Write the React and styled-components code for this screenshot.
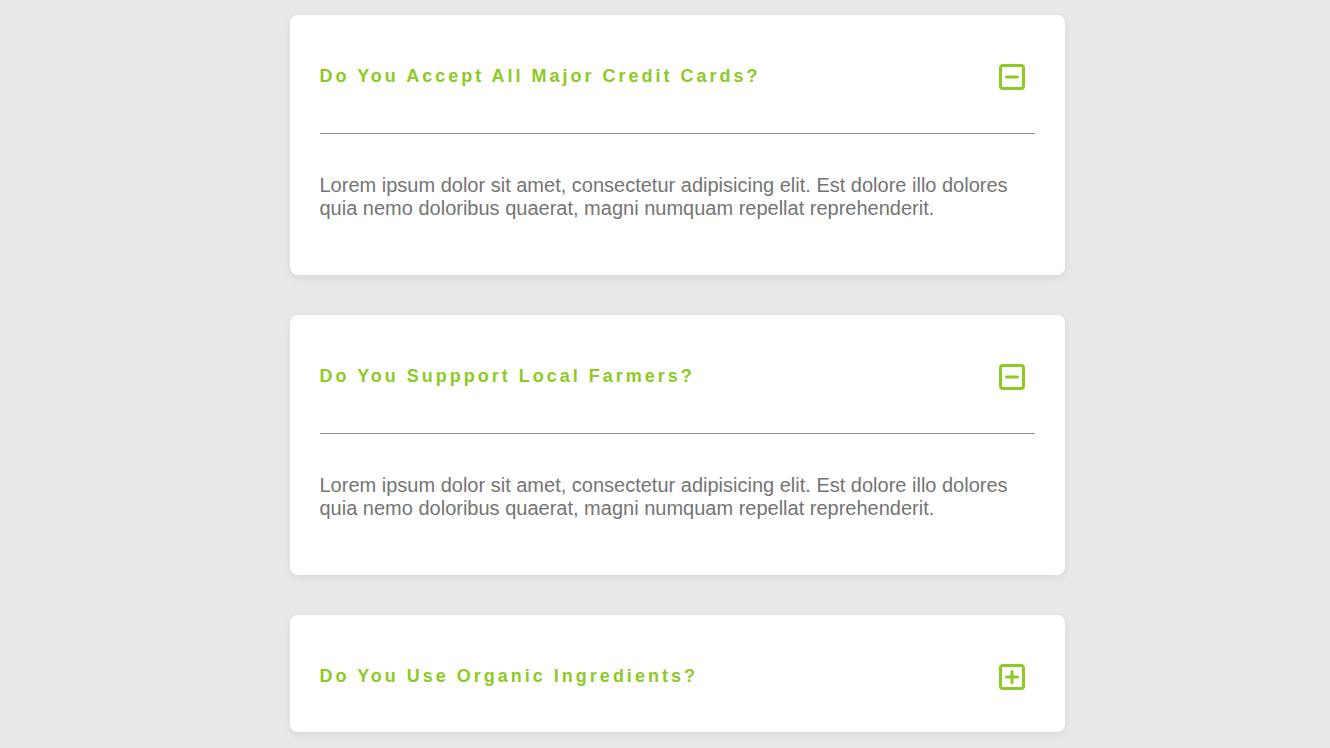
import { useState } from "react"
import styled, { createGlobalStyle } from "styled-components"

const GlobalStyle = createGlobalStyle`
  * { box-sizing: border-box; }
  body {
    margin: 0;
    background: #e9e9e9;
    font-family: "Liberation Sans", Arial, sans-serif;
  }
`

const Wrapper = styled.div`
  padding-left: 24px;
`

const Page = styled.div`
  width: 775px;
  margin: 0 auto;
  padding: 15px 0;
  display: flex;
  flex-direction: column;
  gap: 40px;
`

const Card = styled.div`
  background: #fff;
  border-radius: 8px;
  padding: 0 30px;
  box-shadow: 0 3px 10px rgba(0, 0, 0, 0.08);
`

const Header = styled.div`
  display: flex;
  align-items: center;
  justify-content: space-between;
  padding: 43px 0 ${(props) => (props.open ? "38px" : "37px")};
  border-bottom: ${(props) => (props.open ? "1px solid #8f8f8f" : "none")};
  cursor: pointer;
`

const Title = styled.h3`
  margin: 0;
  font-size: 18px;
  line-height: 37px;
  font-weight: 700;
  letter-spacing: 3px;
  color: #8dca24;
`

const Toggle = styled.span`
  width: 26px;
  height: 26px;
  margin-right: 10px;
  display: flex;
  align-items: center;
  justify-content: center;
`

const Body = styled.p`
  margin: 0;
  padding: 40px 20px 55px 0;
  font-size: 20px;
  line-height: 23px;
  color: #747474;
`

const Icon = ({ open }) => (
  <svg width="26" height="26" viewBox="0 0 26 26" fill="none" stroke="#8dca24" strokeWidth="3" strokeLinecap="round">
    <rect x="1.5" y="1.5" width="23" height="23" rx="2.5" />
    <line x1="7.5" y1="13" x2="18.5" y2="13" />
    {!open && <line x1="13" y1="7.5" x2="13" y2="18.5" />}
  </svg>
)

const faqs = [
  { q: "Do You Accept All Major Credit Cards?", open: true },
  { q: "Do You Suppport Local Farmers?", open: true },
  { q: "Do You Use Organic Ingredients?", open: false },
]

const text =
  "Lorem ipsum dolor sit amet, consectetur adipisicing elit. Est dolore illo dolores quia nemo doloribus quaerat, magni numquam repellat reprehenderit."

const App = () => {
  const [open, setOpen] = useState(faqs.map((f) => f.open))

  const toggle = (i) => setOpen(open.map((o, j) => (j === i ? !o : o)))

  return (
    <>
      <GlobalStyle />
      <Wrapper>
        <Page>
          {faqs.map((f, i) => (
            <Card key={f.q}>
              <Header open={open[i]} onClick={() => toggle(i)}>
                <Title>{f.q}</Title>
                <Toggle>
                  <Icon open={open[i]} />
                </Toggle>
              </Header>
              {open[i] && <Body>{text}</Body>}
            </Card>
          ))}
        </Page>
      </Wrapper>
    </>
  )
}

export default App
